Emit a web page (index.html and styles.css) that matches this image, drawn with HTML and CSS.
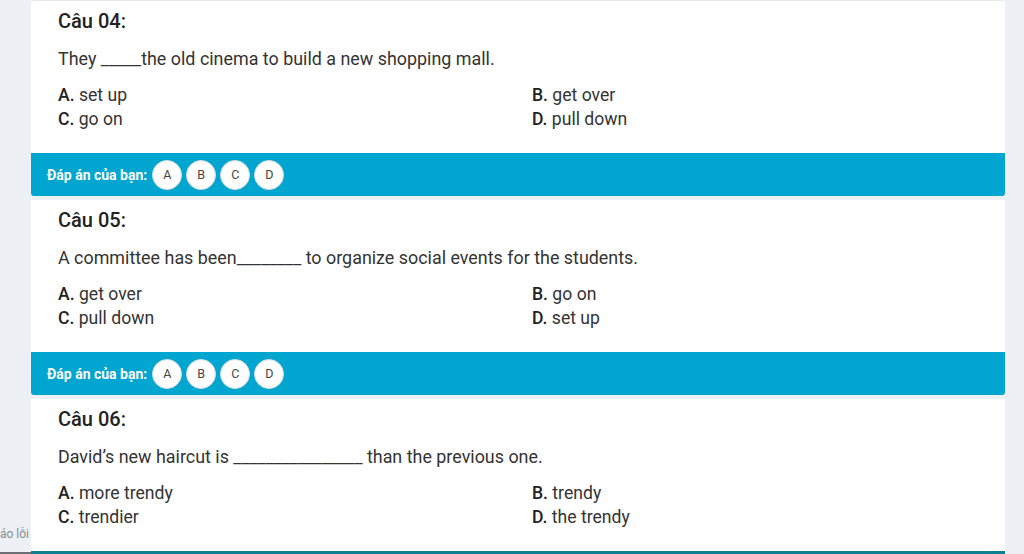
FILE: index.html
```html
<!DOCTYPE html>
<html lang="vi">
<head>
<meta charset="utf-8">
<link rel="stylesheet" href="styles.css">
</head>
<body>
<div class="page">
  <div class="side"><span class="report">áo lỗi</span></div>
  <main class="list">
    <section class="question">
      <div class="card first">
        <h2 class="title">Câu 04:</h2>
        <p class="text">They _____the old cinema to build a new shopping mall.</p>
        <div class="options">
          <div class="opt"><b>A.</b> set up</div>
          <div class="opt"><b>B.</b> get over</div>
          <div class="opt"><b>C.</b> go on</div>
          <div class="opt"><b>D.</b> pull down</div>
        </div>
      </div>
      <div class="answer">
        <span class="label">Đáp án của bạn:</span>
        <span class="choice">A</span><span class="choice">B</span><span class="choice">C</span><span class="choice">D</span>
      </div>
    </section>
    <section class="question">
      <div class="card">
        <h2 class="title">Câu 05:</h2>
        <p class="text">A committee has been________ to organize social events for the students.</p>
        <div class="options">
          <div class="opt"><b>A.</b> get over</div>
          <div class="opt"><b>B.</b> go on</div>
          <div class="opt"><b>C.</b> pull down</div>
          <div class="opt"><b>D.</b> set up</div>
        </div>
      </div>
      <div class="answer">
        <span class="label">Đáp án của bạn:</span>
        <span class="choice">A</span><span class="choice">B</span><span class="choice">C</span><span class="choice">D</span>
      </div>
    </section>
    <section class="question">
      <div class="card">
        <h2 class="title">Câu 06:</h2>
        <p class="text">David’s new haircut is ________________ than the previous one.</p>
        <div class="options">
          <div class="opt"><b>A.</b> more trendy</div>
          <div class="opt"><b>B.</b> trendy</div>
          <div class="opt"><b>C.</b> trendier</div>
          <div class="opt"><b>D.</b> the trendy</div>
        </div>
      </div>
      <div class="answer-edge"></div>
    </section>
  </main>
</div>
</body>
</html>
```

FILE: styles.css
```css
html, body {
  margin: 0;
  padding: 0;
  height: 554px;
  overflow: hidden;
  background: #edf0f4;
  font-family: Roboto, "Noto Sans", "Liberation Sans", sans-serif;
  color: #333;
}

.page {
  display: flex;
}

.side {
  width: 31px;
  flex: none;
  position: relative;
}

.side::after {
  content: "";
  position: absolute;
  left: 0;
  right: 0;
  top: 552px;
  height: 2px;
  background: #6b6f73;
}

.report {
  position: absolute;
  left: 0;
  top: 527px;
  font-size: 12px;
  color: #8a8d90;
  white-space: nowrap;
}

.list {
  width: 974px;
  display: flex;
  flex-direction: column;
  gap: 4px;
}

.card {
  background: #fff;
  padding: 8px 27px 22px;
}

.card.first {
  border-top: 1px solid #e6e9ed;
}

.title {
  margin: 0;
  font-size: 20px;
  line-height: 24px;
  font-weight: 500;
  color: #222;
}

.text {
  margin: 14px 0 12px;
  font-size: 17.9px;
  line-height: 24px;
  color: #333;
}

.options {
  display: grid;
  grid-template-columns: 474px 1fr;
  font-size: 17.6px;
  line-height: 24px;
  color: #333;
}

.opt b {
  font-weight: 500;
  color: #222;
}

.answer {
  height: 43px;
  background: #00a5d0;
  border-radius: 0 0 3px 3px;
  display: flex;
  align-items: center;
  padding-left: 16px;
  gap: 4px;
}

.answer-edge {
  height: 3px;
  background: #0d7f90;
}

.label {
  color: #fff;
  font-size: 14px;
  font-weight: 700;
  margin-right: 1px;
}

.choice {
  width: 30px;
  height: 30px;
  border-radius: 50%;
  background: #fff;
  border: 1px solid #d8dde2;
  box-sizing: border-box;
  display: flex;
  align-items: center;
  justify-content: center;
  font-size: 12.5px;
  color: #444;
}
```
